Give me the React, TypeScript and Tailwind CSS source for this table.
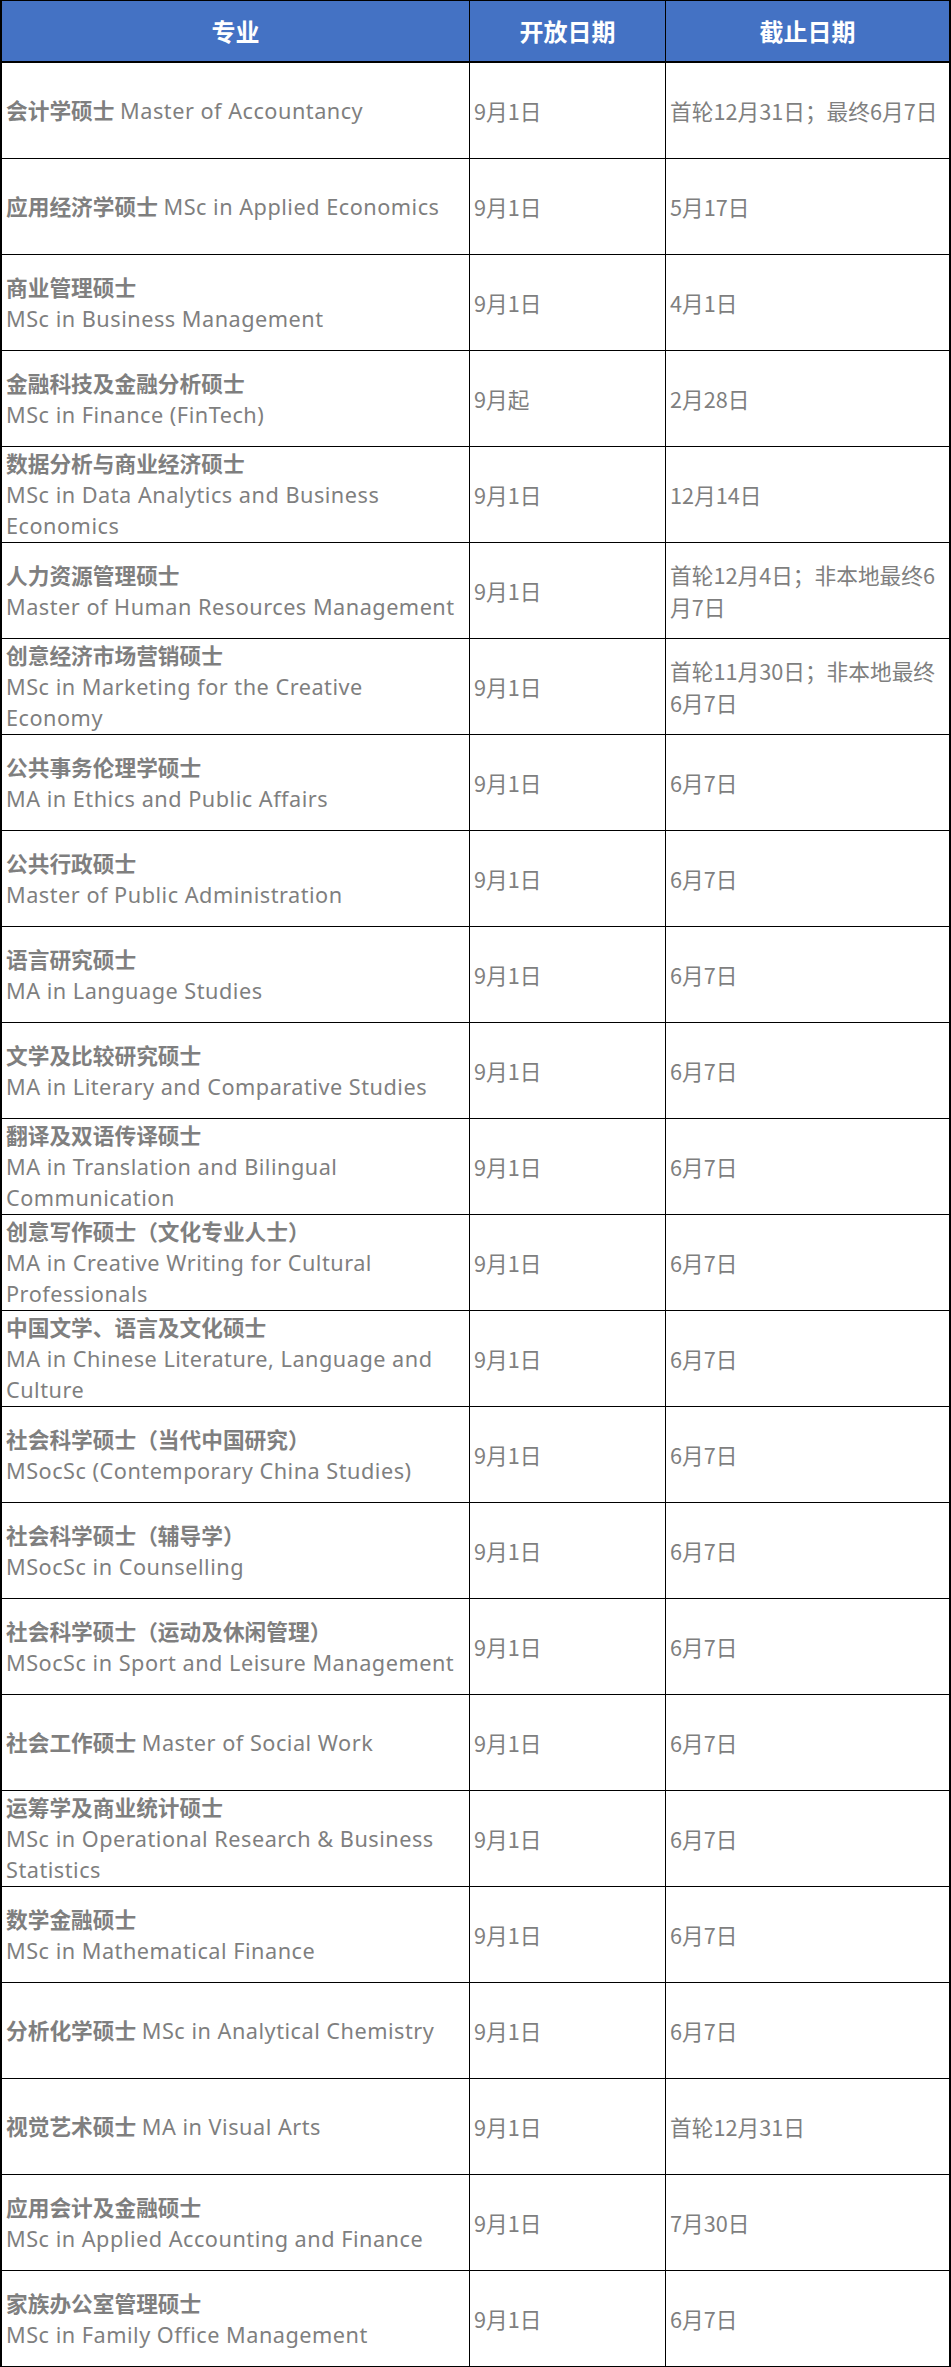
import React from "react";

type Row = {
  zh: string;
  en: string[];
  inline?: boolean;
  open?: string;
  close: string[];
};

const rows: Row[] = [
  { zh: "会计学硕士", en: ["Master of Accountancy"], inline: true, close: ["首轮12月31日；最终6月7日"] },
  { zh: "应用经济学硕士", en: ["MSc in Applied Economics"], inline: true, close: ["5月17日"] },
  { zh: "商业管理硕士", en: ["MSc in Business Management"], close: ["4月1日"] },
  { zh: "金融科技及金融分析硕士", en: ["MSc in Finance (FinTech)"], open: "9月起", close: ["2月28日"] },
  { zh: "数据分析与商业经济硕士", en: ["MSc in Data Analytics and Business", "Economics"], close: ["12月14日"] },
  { zh: "人力资源管理硕士", en: ["Master of Human Resources Management"], close: ["首轮12月4日；非本地最终6", "月7日"] },
  { zh: "创意经济市场营销硕士", en: ["MSc in Marketing for the Creative", "Economy"], close: ["首轮11月30日；非本地最终", "6月7日"] },
  { zh: "公共事务伦理学硕士", en: ["MA in Ethics and Public Affairs"], close: ["6月7日"] },
  { zh: "公共行政硕士", en: ["Master of Public Administration"], close: ["6月7日"] },
  { zh: "语言研究硕士", en: ["MA in Language Studies"], close: ["6月7日"] },
  { zh: "文学及比较研究硕士", en: ["MA in Literary and Comparative Studies"], close: ["6月7日"] },
  { zh: "翻译及双语传译硕士", en: ["MA in Translation and Bilingual", "Communication"], close: ["6月7日"] },
  { zh: "创意写作硕士（文化专业人士）", en: ["MA in Creative Writing for Cultural", "Professionals"], close: ["6月7日"] },
  { zh: "中国文学、语言及文化硕士", en: ["MA in Chinese Literature, Language and", "Culture"], close: ["6月7日"] },
  { zh: "社会科学硕士（当代中国研究）", en: ["MSocSc (Contemporary China Studies)"], close: ["6月7日"] },
  { zh: "社会科学硕士（辅导学）", en: ["MSocSc in Counselling"], close: ["6月7日"] },
  { zh: "社会科学硕士（运动及休闲管理）", en: ["MSocSc in Sport and Leisure Management"], close: ["6月7日"] },
  { zh: "社会工作硕士", en: ["Master of Social Work"], inline: true, close: ["6月7日"] },
  { zh: "运筹学及商业统计硕士", en: ["MSc in Operational Research & Business", "Statistics"], close: ["6月7日"] },
  { zh: "数学金融硕士", en: ["MSc in Mathematical Finance"], close: ["6月7日"] },
  { zh: "分析化学硕士", en: ["MSc in Analytical Chemistry"], inline: true, close: ["6月7日"] },
  { zh: "视觉艺术硕士", en: ["MA in Visual Arts"], inline: true, close: ["首轮12月31日"] },
  { zh: "应用会计及金融硕士", en: ["MSc in Applied Accounting and Finance"], close: ["7月30日"] },
  { zh: "家族办公室管理硕士", en: ["MSc in Family Office Management"], close: ["6月7日"] },
];

const cjk = "font-['Noto_Sans_CJK_SC',sans-serif]";
const latin = "font-['Noto_Sans','Noto_Sans_CJK_SC',sans-serif] tracking-[0.5px]";

function NameCell({ r }: { r: Row }) {
  if (r.inline) {
    return (
      <div className="whitespace-nowrap">
        <span className={`${cjk} font-bold`}>{r.zh}</span>{" "}
        <span className={latin}>{r.en[0]}</span>
      </div>
    );
  }
  return (
    <div className="flex flex-col">
      <span className={`${cjk} font-bold whitespace-nowrap`}>{r.zh}</span>
      {r.en.map((l) => (
        <span key={l} className={`${latin} whitespace-nowrap`}>
          {l}
        </span>
      ))}
    </div>
  );
}

export default function App() {
  return (
    <div className="w-[951px] bg-white">
      <div className="border-l-2 border-r-2 border-t border-black">
        <div className="grid grid-cols-[468px_196px_283px] h-[62px] bg-[#4472c4] border-b-2 border-black">
          {["专业", "开放日期", "截止日期"].map((h, i) => (
            <div
              key={h}
              className={`flex items-center justify-center text-white font-bold text-[24px] ${cjk} ${i < 2 ? "border-r border-black" : ""}`}
            >
              {h}
            </div>
          ))}
        </div>
        {rows.map((r) => (
          <div
            key={r.zh}
            className="grid grid-cols-[468px_196px_283px] h-[96px] border-b border-black text-[21.7px] leading-[31.6px] text-[#7f7f7f]"
          >
            <div className="flex items-center pl-[4px] border-r border-black">
              <NameCell r={r} />
            </div>
            <div className={`flex items-center pl-[4px] border-r border-black ${cjk}`}>
              <span className="whitespace-nowrap">{r.open ?? "9月1日"}</span>
            </div>
            <div className={`flex items-center pl-[4px] ${cjk}`}>
              <div className="flex flex-col">
                {r.close.map((c) => (
                  <span key={c} className="whitespace-nowrap">
                    {c}
                  </span>
                ))}
              </div>
            </div>
          </div>
        ))}
      </div>
    </div>
  );
}
